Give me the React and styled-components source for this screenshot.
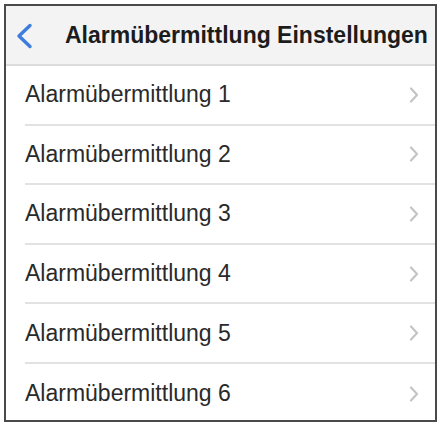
import React from 'react'
import styled, { createGlobalStyle } from 'styled-components'

const Global = createGlobalStyle`
  html, body { margin: 0; padding: 0; background: #fff; }
  body { font-family: "Liberation Sans", Arial, sans-serif; }
`

const Page = styled.div`
  padding: 4px 3px 4px 4px;
`

const Frame = styled.div`
  width: 433px;
  height: 418px;
  box-sizing: border-box;
  border: 2px solid #4a4a4a;
  background: #fff;
  display: flex;
  flex-direction: column;
  overflow: hidden;
`

const Header = styled.div`
  height: 60px;
  flex: none;
  box-sizing: border-box;
  background: #f3f3f3;
  border-bottom: 2px solid #dcdcdc;
  display: flex;
  align-items: center;
  padding-left: 9px;
`

const BackButton = styled.div`
  width: 18px;
  height: 26px;
  display: flex;
  margin-right: 32px;
  margin-top: 2px;
`

const Title = styled.div`
  font-size: 23px;
  font-weight: bold;
  color: #1c1c1c;
  white-space: nowrap;
`

const List = styled.div`
  display: flex;
  flex-direction: column;
  padding-left: 19px;
`

const Row = styled.div`
  height: 59.6px;
  box-sizing: border-box;
  display: flex;
  align-items: center;
  justify-content: space-between;
  padding-right: 16px;
  border-bottom: ${p => (p.last ? 'none' : '2px solid #e2e2e2')};
`

const Label = styled.span`
  font-size: 23px;
  color: #2a2a2a;
`

const Chevron = () => (
  <svg width="10" height="16" viewBox="0 0 10 16">
    <polyline points="2,1.5 8,8 2,14.5" fill="none" stroke="#c4c4c8" strokeWidth="2.2" strokeLinecap="round" strokeLinejoin="round" />
  </svg>
)

const BackIcon = () => (
  <svg width="18" height="26" viewBox="0 0 18 26">
    <polyline points="15,2.5 4,13 15,23.5" fill="none" stroke="#3e7ddd" strokeWidth="3.4" strokeLinecap="round" strokeLinejoin="round" />
  </svg>
)

const items = [1, 2, 3, 4, 5, 6]

const App = () => (
  <Page>
    <Global />
    <Frame>
      <Header>
        <BackButton><BackIcon /></BackButton>
        <Title>Alarmübermittlung Einstellungen</Title>
      </Header>
      <List>
        {items.map((n, i) => (
          <Row key={n} last={i === items.length - 1}>
            <Label>Alarmübermittlung {n}</Label>
            <Chevron />
          </Row>
        ))}
      </List>
    </Frame>
  </Page>
)

export default App
